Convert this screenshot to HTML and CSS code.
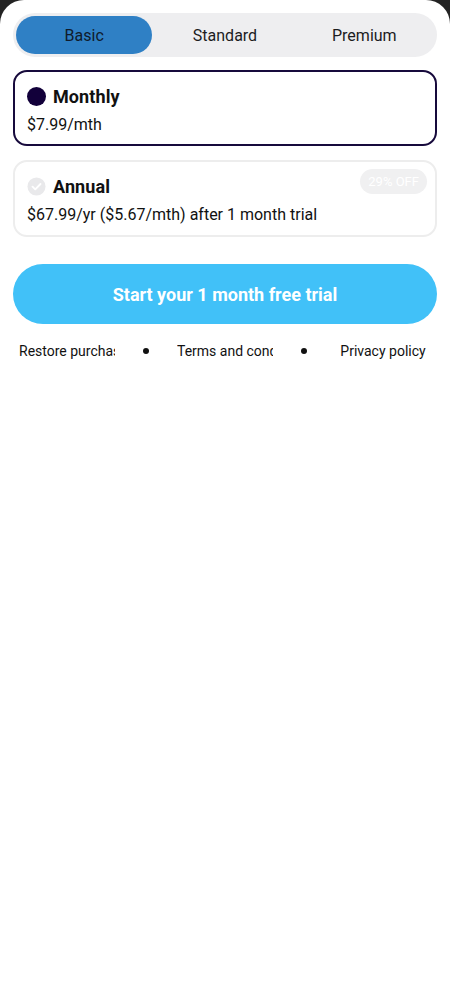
FILE: index.html
```html
<!DOCTYPE html>
<html>
<head>
<meta charset="utf-8">
<link rel="stylesheet" href="styles.css">
</head>
<body>
<div class="sheet">
  <div class="tabs">
    <div class="tab active">Basic</div>
    <div class="tab">Standard</div>
    <div class="tab">Premium</div>
  </div>

  <div class="plan selected">
    <div class="plan-head">
      <span class="dot"></span>
      <span class="plan-name">Monthly</span>
    </div>
    <div class="plan-price">$7.99/mth</div>
  </div>

  <div class="plan">
    <div class="plan-head">
      <svg class="check" width="19" height="19" viewBox="0 0 20 20">
        <circle cx="10" cy="10" r="9.5" fill="#e9e9eb"/>
        <path d="M5.8 10.2 L8.7 13 L14.2 7.4" fill="none" stroke="#ffffff" stroke-width="2" stroke-linecap="round" stroke-linejoin="round"/>
      </svg>
      <span class="plan-name">Annual</span>
    </div>
    <div class="plan-price">$67.99/yr ($5.67/mth) after 1 month trial</div>
    <span class="badge">29% OFF</span>
  </div>

  <button class="cta">Start your 1 month free trial</button>

  <div class="links">
    <span class="link">Restore purchases</span>
    <span class="sep"></span>
    <span class="link">Terms and conditions</span>
    <span class="sep"></span>
    <span class="link center">Privacy policy</span>
  </div>
</div>
</body>
</html>
```

FILE: styles.css
```css
html, body {
  margin: 0;
  padding: 0;
  background: #232323;
  font-family: Roboto, "Noto Sans", Arial, sans-serif;
}

.sheet {
  background: #ffffff;
  border-radius: 24px 24px 0 0;
  min-height: 1000px;
  box-sizing: border-box;
  padding: 13px 13px 0 13px;
  display: flex;
  flex-direction: column;
}

.tabs {
  display: grid;
  grid-template-columns: 1fr 1fr 1fr;
  background: #eeeef0;
  border-radius: 22px;
  padding: 3px;
  height: 44px;
  box-sizing: border-box;
}

.tab {
  display: flex;
  align-items: center;
  justify-content: center;
  font-size: 16px;
  color: #1c1c1e;
  border-radius: 19px;
}

.tab.active {
  background: #2f80c5;
  color: #0f1b2b;
  margin-right: 3px;
}

.plan {
  position: relative;
  margin-top: 13px;
  border: 2px solid #ededed;
  border-radius: 14px;
  padding: 12px 12px 10px 12px;
  height: 77px;
  box-sizing: border-box;
}

.plan.selected {
  border-color: #170a3c;
  height: 76px;
}

.plan + .plan {
  margin-top: 14px;
}

.plan-head {
  display: flex;
  align-items: center;
  gap: 7px;
  height: 24px;
}

.dot {
  width: 19px;
  height: 19px;
  border-radius: 50%;
  background: #12003a;
}

.check {
  display: block;
}

.plan-name {
  font-size: 18px;
  font-weight: 700;
  color: #111111;
  letter-spacing: 0.1px;
}

.plan-price {
  margin-top: 7px;
  font-size: 16px;
  color: #111111;
}

.badge {
  position: absolute;
  top: 7px;
  right: 8px;
  background: #f0f0f1;
  color: #ffffff;
  font-size: 13px;
  border-radius: 13px;
  padding: 0 8px;
  height: 25px;
  line-height: 25px;
}

.cta {
  margin-top: 27px;
  height: 60px;
  border: none;
  border-radius: 30px;
  background: #41c1f8;
  color: #ffffff;
  font-family: inherit;
  font-size: 18px;
  font-weight: 700;
}

.links {
  margin: 17px 6px 0 6px;
  display: flex;
  justify-content: space-between;
  align-items: center;
  height: 20px;
}

.link {
  width: 96px;
  overflow: hidden;
  white-space: nowrap;
  font-size: 14px;
  color: #111111;
}

.link.center {
  text-align: center;
}

.sep {
  width: 6px;
  height: 6px;
  border-radius: 50%;
  background: #111111;
}
```
